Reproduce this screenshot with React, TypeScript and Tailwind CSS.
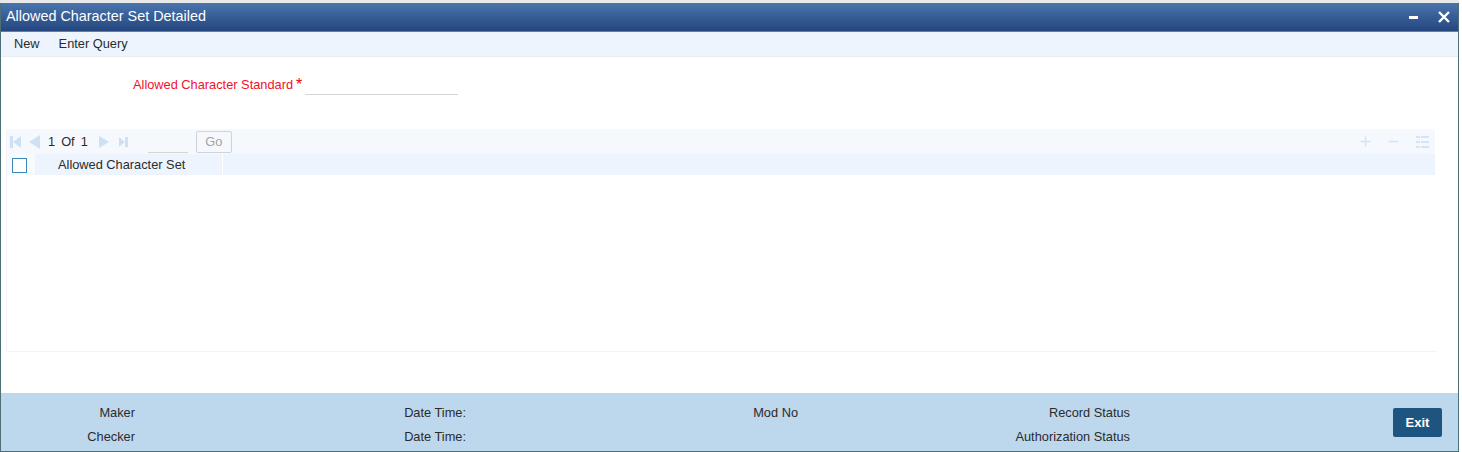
import { Minus, Plus } from 'lucide-react';

const font = { fontFamily: '"Liberation Sans", Arial, sans-serif' };

function FirstIcon() {
  return (
    <svg width="11" height="14" viewBox="0 0 11 14" className="fill-[#cfe0f5]">
      <rect x="0" y="1" width="3" height="12" />
      <path d="M11 1v12L3 7z" />
    </svg>
  );
}

function PrevIcon() {
  return (
    <svg width="11" height="14" viewBox="0 0 11 14" className="fill-[#cfe0f5]">
      <path d="M11 0v14L0 7z" />
    </svg>
  );
}

function NextIcon() {
  return (
    <svg width="10" height="12" viewBox="0 0 10 12" className="fill-[#cfe0f5]">
      <path d="M0 0v12l10-6z" />
    </svg>
  );
}

function LastIcon() {
  return (
    <svg width="9" height="10" viewBox="0 0 9 10" className="fill-[#cfe0f5]">
      <path d="M0 0v10l6-5z" />
      <rect x="6" y="0" width="3" height="10" />
    </svg>
  );
}

function ListIcon() {
  return (
    <svg width="13" height="12" viewBox="0 0 13 12" className="fill-[#d5e3f6]">
      <rect x="0" y="0" width="4" height="2" />
      <rect x="5" y="0" width="8" height="2" />
      <rect x="0" y="5" width="4" height="2" />
      <rect x="5" y="5" width="8" height="2" />
      <rect x="0" y="10" width="4" height="2" />
      <rect x="5" y="10" width="8" height="2" />
    </svg>
  );
}

export default function App() {
  return (
    <div style={font} className="w-[1462px] h-[452px] bg-white text-[12.8px] text-[#2b2b2b] overflow-hidden">
      <div className="h-[3px] w-[1459px] bg-[#e9e9e9]" />
      <div className="w-[1459px] h-[449px] border-x border-b border-[#4f6f78] flex flex-col">
        {/* Title bar */}
        <div className="h-[29px] shrink-0 flex items-center justify-between pl-[5px] pr-[8px] bg-gradient-to-b from-[#4a74ad] to-[#25467e] border-b border-[#5d7fae]">
          <span className="text-white text-[14.4px]">Allowed Character Set Detailed</span>
          <div className="flex items-center gap-[20px]">
            <div className="w-[9px] h-[3px] bg-white mt-[1px]" />
            <svg width="12" height="12" viewBox="0 0 12 12" className="stroke-white" strokeWidth="2.4">
              <path d="M1 1l10 10M11 1L1 11" />
            </svg>
          </div>
        </div>

        {/* Toolbar */}
        <div className="h-[25px] shrink-0 flex items-center gap-[19px] pl-[13px] bg-[#edf4fd] border-b border-[#e8ebf0]">
          <span>New</span>
          <span>Enter Query</span>
        </div>

        {/* Form field */}
        <div className="h-[72px] shrink-0 pt-[19px] pl-[132px] flex items-start">
          <span className="text-[#f0102c] leading-[18px]">Allowed Character Standard</span>
          <span className="text-[#f00000] text-[16px] leading-[18px] ml-[3px]">*</span>
          <div className="w-[153px] h-[19px] ml-[3px] border-b border-[#d5d5d5]" />
        </div>

        {/* Grid */}
        <div className="h-[223px] w-[1431px] shrink-0 ml-[5px] border-l border-b border-[#f3f3fb] flex flex-col">
          <div className="h-[25px] w-[1428px] shrink-0 bg-[#f5f9fe] flex items-center justify-between">
            <div className="flex items-center pl-[3px]">
              <FirstIcon />
              <div className="ml-[8px]"><PrevIcon /></div>
              <span className="ml-[8px]">1</span>
              <span className="ml-[6px]">Of</span>
              <span className="ml-[6px]">1</span>
              <div className="ml-[11px]"><NextIcon /></div>
              <div className="ml-[10px]"><LastIcon /></div>
              <div className="ml-[20px] w-[40px] h-[22px] border-b border-[#d5d5d5]" />
              <div className="ml-[8px] w-[36px] h-[22px] border border-[#cfd4da] rounded-[2px] flex items-center justify-center text-[#a3a3a3]">Go</div>
            </div>
            <div className="flex items-center pr-[6px]">
              <Plus size={15} strokeWidth={2.5} className="text-[#d5e3f6]" />
              <Minus size={15} strokeWidth={2.5} className="text-[#d5e3f6] ml-[13px]" />
              <div className="ml-[15px]"><ListIcon /></div>
            </div>
          </div>
          <div className="h-[21px] w-[1428px] shrink-0 flex bg-[#edf4fd]">
            <div className="w-[28px] shrink-0 bg-[#f8fbfe] flex items-center pl-[5px] pt-[2px]">
              <div className="w-[15px] h-[15px] bg-white border border-[#3a87b8]" />
            </div>
            <div className="w-[188px] shrink-0 pl-[23px] leading-[21px] border-r border-white">Allowed Character Set</div>
          </div>
        </div>

        {/* Footer */}
        <div className="mt-[41px] flex-1 bg-[#bdd7ed] flex items-start">
          <div className="w-[134px] pt-[13px] flex flex-col gap-[10px] items-end text-right leading-[14px]">
            <span>Maker</span>
            <span>Checker</span>
          </div>
          <div className="w-[331px] pt-[13px] flex flex-col gap-[10px] items-end leading-[14px]">
            <span>Date Time:</span>
            <span>Date Time:</span>
          </div>
          <div className="w-[332px] pt-[13px] flex justify-end leading-[14px]">
            <span>Mod No</span>
          </div>
          <div className="w-[332px] pt-[13px] flex flex-col gap-[10px] items-end leading-[14px]">
            <span>Record Status</span>
            <span>Authorization Status</span>
          </div>
          <div className="ml-[263px] mt-[15px] w-[49px] h-[29px] bg-[#1e5580] rounded-[2px] flex items-center justify-center text-white font-bold text-[13px]">Exit</div>
        </div>
      </div>
    </div>
  );
}
